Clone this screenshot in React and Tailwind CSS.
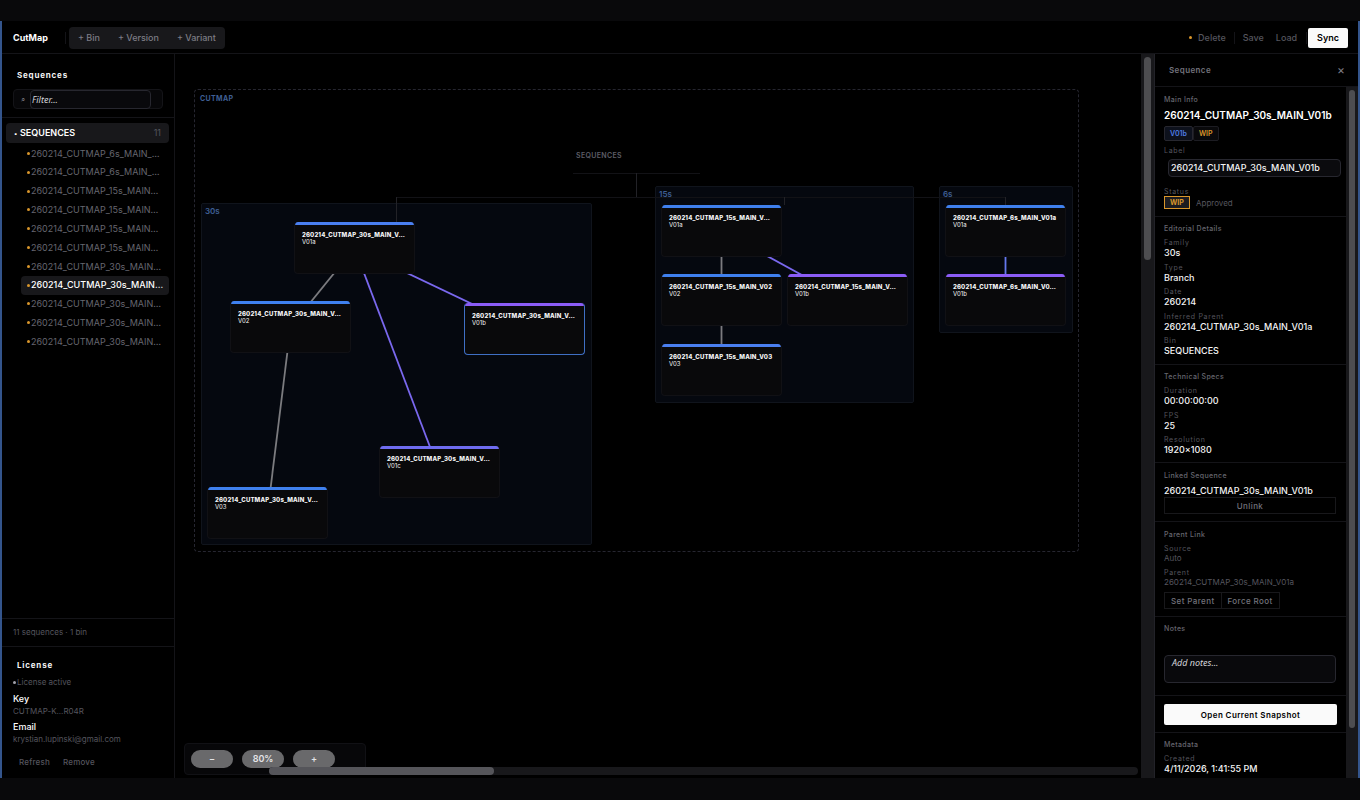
import { useState } from 'react';

const NODE_W = 121;
const NODE_H = 52;

const sequences = [
    { id: '6-1a', label: '260214_CUTMAP_6s_MAIN_…' },
    { id: '6-1b', label: '260214_CUTMAP_6s_MAIN_…' },
    { id: '15-1a', label: '260214_CUTMAP_15s_MAIN…' },
    { id: '15-1b', label: '260214_CUTMAP_15s_MAIN…' },
    { id: '15-2', label: '260214_CUTMAP_15s_MAIN…' },
    { id: '15-3', label: '260214_CUTMAP_15s_MAIN…' },
    { id: '30-1a', label: '260214_CUTMAP_30s_MAIN…' },
    { id: '30-1b', label: '260214_CUTMAP_30s_MAIN…' },
    { id: '30-1c', label: '260214_CUTMAP_30s_MAIN…' },
    { id: '30-2', label: '260214_CUTMAP_30s_MAIN…' },
    { id: '30-3', label: '260214_CUTMAP_30s_MAIN…' },
];

const groups = [
    { label: '30s', x: 26, y: 149, w: 391, h: 342 },
    { label: '15s', x: 480, y: 132, w: 259, h: 217 },
    { label: '6s', x: 764, y: 132, w: 134, h: 147 },
];

const nodes = [
    { id: '30-1a', title: '260214_CUTMAP_30s_MAIN_V…', version: 'V01a', x: 119, y: 168, bar: 'bg-[#4a7ff0]' },
    { id: '30-2', title: '260214_CUTMAP_30s_MAIN_V…', version: 'V02', x: 55, y: 247, bar: 'bg-[#3f80ee]' },
    { id: '30-1b', title: '260214_CUTMAP_30s_MAIN_V…', version: 'V01b', x: 289, y: 249, bar: 'bg-[#8b5cf6]' },
    { id: '30-1c', title: '260214_CUTMAP_30s_MAIN_V…', version: 'V01c', x: 204, y: 392, bar: 'bg-[#6f6cf0]' },
    { id: '30-3', title: '260214_CUTMAP_30s_MAIN_V…', version: 'V03', x: 32, y: 433, bar: 'bg-[#3f80ee]' },
    { id: '15-1a', title: '260214_CUTMAP_15s_MAIN_V…', version: 'V01a', x: 486, y: 151, bar: 'bg-[#3f80ee]' },
    { id: '15-2', title: '260214_CUTMAP_15s_MAIN_V02', version: 'V02', x: 486, y: 220, bar: 'bg-[#3f80ee]' },
    { id: '15-1b', title: '260214_CUTMAP_15s_MAIN_V…', version: 'V01b', x: 612, y: 220, bar: 'bg-[#8b5cf6]' },
    { id: '15-3', title: '260214_CUTMAP_15s_MAIN_V03', version: 'V03', x: 486, y: 290, bar: 'bg-[#4a7ff0]' },
    { id: '6-1a', title: '260214_CUTMAP_6s_MAIN_V01a', version: 'V01a', x: 770, y: 151, bar: 'bg-[#3f80ee]' },
    { id: '6-1b', title: '260214_CUTMAP_6s_MAIN_V0…', version: 'V01b', x: 770, y: 220, bar: 'bg-[#8b5cf6]' },
];

const edges = [
    ['30-1a', '30-2', '#7b7b7f'],
    ['30-2', '30-3', '#7b7b7f'],
    ['30-1a', '30-1b', '#7a68ee'],
    ['30-1a', '30-1c', '#7a68ee'],
    ['15-1a', '15-2', '#7b7b7f'],
    ['15-2', '15-3', '#7b7b7f'],
    ['15-1a', '15-1b', '#7a68ee'],
    ['6-1a', '6-1b', '#6478ee'],
];

function Toolbar() {
    return (
        <header className="flex h-[33px] shrink-0 items-center border-b border-[#141418] px-[10px] pt-px">
            <h1 className="pl-px text-[9px] font-bold text-white">CutMap</h1>
            <div className="ml-[17px] h-3 w-px bg-[#141418]" />
            <div className="ml-[3px] flex rounded-sm bg-[#18181b] text-[9px] font-medium text-[#7c7c84]">
                <button type="button" className="h-[22px] px-[9px]">+ Bin</button>
                <button type="button" className="h-[22px] px-[9px]">+ Version</button>
                <button type="button" className="h-[22px] px-[9px]">+ Variant</button>
            </div>
            <div className="ml-auto flex items-center text-[9px] font-medium text-[#55555e]">
                <span className="mr-[6px] h-[3px] w-[3px] rounded-full bg-[#d9962b]" />
                <button type="button">Delete</button>
                <div className="mx-2 h-3 w-px bg-[#141418]" />
                <button type="button">Save</button>
                <button type="button" className="ml-3">Load</button>
                <div className="mr-px ml-[9px] h-3 w-px bg-[#141418]" />
                <button type="button" className="h-5 rounded-xs bg-[#fafafa] px-[9px] font-semibold text-black">
                    Sync
                </button>
            </div>
        </header>
    );
}

function Sidebar({ selected, onSelect }) {
    return (
        <aside className="flex w-[173px] shrink-0 flex-col border-r border-[#141418]">
            <div className="border-b border-[#141418] px-[11px] pt-[15px] pb-2">
                <h2 className="pl-1 text-[8px] leading-3 font-bold tracking-widest text-[#f4f4f5]">Sequences</h2>
                <div className="mt-2 flex h-5 w-[150px] items-center rounded-sm border border-[#141418] bg-[#070709] pl-[7px]">
                    <span className="w-[9px] text-[8px] text-[#7c7c84]">⌕</span>
                    <input
                        type="text"
                        aria-label="Filter sequences"
                        placeholder="Filter..."
                        className="h-[19px] w-[121px] rounded-sm border border-[#27272f] bg-[#09090c] px-px font-['Noto_Sans',sans-serif] text-[9px] text-white outline-none placeholder:text-[#d4d4d8] placeholder:italic"
                    />
                </div>
            </div>

            <div className="flex-1 overflow-hidden pt-[5px] pr-[5px] pl-1">
                <button type="button" className="flex h-5 w-full items-center rounded-sm bg-[#18181b] px-2 text-[9px] text-white">
                    <span className="w-[6px] text-left text-[6px]">▪</span>
                    <span className="font-semibold">SEQUENCES</span>
                    <span className="ml-auto text-[#55555e]">11</span>
                </button>
                <ul className="mt-px grid h-[207px] grid-rows-11 pl-[15px]">
                    {sequences.map((s) => (
                        <li key={s.id}>
                            <button
                                type="button"
                                onClick={() => onSelect(s.id)}
                                className={`flex h-full w-full items-center rounded-sm px-[6px] text-[9px] whitespace-nowrap ${
                                    selected === s.id
                                        ? 'bg-[#18181b] font-medium text-white'
                                        : 'text-[#66666f]'
                                }`}
                            >
                                <span className="mr-px h-[3px] w-[3px] shrink-0 rounded-full bg-[#d9962b]" />
                                {s.label}
                            </button>
                        </li>
                    ))}
                </ul>
            </div>

            <p className="border-t border-[#141418] px-[11px] py-2 text-[8px] leading-[11px] text-[#55555e]">
                11 sequences · 1 bin
            </p>
            <section className="border-t border-[#141418] px-[11px] pt-3 pb-[10px] text-[8px] leading-3 text-[#55555e]">
                <h2 className="pl-1 font-bold tracking-widest text-[#f4f4f5]">License</h2>
                <p className="mt-[5px] flex items-center">
                    <span className="mr-px h-[3px] w-[3px] rounded-full bg-[#a1a1aa]" />
                    License active
                </p>
                <h3 className="mt-[5px] text-[9px] leading-3 font-medium text-white">Key</h3>
                <p>CUTMAP-K...R04R</p>
                <h3 className="mt-1 text-[9px] leading-3 font-medium text-white">Email</h3>
                <p>krystian.lupinski@gmail.com</p>
                <div className="mt-[11px] flex gap-[13px] pl-[6px] font-medium">
                    <button type="button" className="tracking-wide">Refresh</button>
                    <button type="button" className="tracking-wide">Remove</button>
                </div>
            </section>
        </aside>
    );
}

function Edge({ from, to, color }) {
    const a = nodes.find((n) => n.id === from);
    const b = nodes.find((n) => n.id === to);

    return (
        <line
            x1={a.x + NODE_W / 2}
            y1={a.y + NODE_H / 2}
            x2={b.x + NODE_W / 2}
            y2={b.y + NODE_H / 2}
            stroke={color}
            strokeWidth="1.8"
        />
    );
}

function Canvas({ selected }) {
    return (
        <main className="relative min-w-0 flex-1 overflow-hidden">
            {/* Bin outline */}
            <div className="absolute top-[35px] left-[19px] h-[463px] w-[885px] rounded-sm border border-dashed border-[#262630]">
                <span className="block px-[5px] pt-1 text-[7px] leading-[10px] font-bold tracking-wider text-[#3f5f94]">
                    CUTMAP
                </span>
            </div>

            {/* Family groups */}
            {groups.map((g) => (
                <div
                    key={g.label}
                    className="absolute rounded-xs border border-[#10141c] bg-[#05080f] px-[3px] pt-[2px] text-[8px] leading-[10px] font-semibold text-[#3f5f94]"
                    style={{ left: g.x, top: g.y, width: g.w, height: g.h }}
                >
                    {g.label}
                </div>
            ))}

            <svg className="absolute inset-0 h-full w-full" fill="none">
                <path d="M398 119.500H525M221 143.500H831" stroke="#121216" />
                <path d="M461.500 119V143M221.500 143V168M609.500 143V151M830.500 143V151" stroke="#222227" />
                {edges.map(([from, to, color]) => (
                    <Edge key={from + to} from={from} to={to} color={color} />
                ))}
            </svg>

            <span className="absolute top-[97px] left-[401px] text-[7px] leading-[10px] font-semibold tracking-wider text-[#5d5d66]">
                SEQUENCES
            </span>

            {/* Sequence nodes */}
            {nodes.map((n) => (
                <div
                    key={n.id}
                    className={`absolute overflow-hidden rounded border border-t-0 bg-[#09090b] ${
                        selected === n.id ? 'border-[#3f6fc4]' : 'border-[#111115]'
                    }`}
                    style={{ left: n.x, top: n.y, width: NODE_W, height: NODE_H }}
                >
                    <div className={`h-[3px] ${n.bar}`} />
                    <div className="px-[7px] pt-[6px] text-[6px] whitespace-nowrap text-[#f4f4f5]">
                        <p className="leading-[8px] font-extrabold tracking-wide">{n.title}</p>
                        <p className="leading-[6px]">{n.version}</p>
                    </div>
                </div>
            ))}

            {/* Zoom controls */}
            <div className="absolute bottom-[3px] left-[9px] flex h-8 w-[182px] gap-[9px] rounded border border-[#111115] bg-[#070709] px-[6px] pt-[6px] text-[9px] font-semibold text-[#e4e4e7]">
                <button type="button" aria-label="Zoom out" className="h-[18px] w-[42px] rounded-full bg-[#69696b]">−</button>
                <button type="button" className="h-[18px] w-[42px] rounded-full bg-[#69696b]">80%</button>
                <button type="button" aria-label="Zoom in" className="h-[18px] w-[42px] rounded-full bg-[#69696b]">+</button>
            </div>

            {/* Horizontal scrollbar */}
            <div className="absolute right-[3px] bottom-[3px] left-[94px] h-2 rounded-full bg-[#18181b]">
                <div className="h-2 w-[225px] rounded-full bg-[#55555a]" />
            </div>
        </main>
    );
}

function Section({ title, className = '', children }) {
    return (
        <section className={`border-b border-[#141418] px-[9px] last:border-b-0 ${className}`}>
            {title && <h3 className="text-[7px] leading-[10px] font-medium tracking-wider text-[#66666f]">{title}</h3>}
            {children}
        </section>
    );
}

function Field({ label, value, muted }) {
    return (
        <div>
            <dt className="text-[7px] leading-[9px] tracking-widest text-[#55555e]">{label}</dt>
            <dd className={muted ? 'text-[8px] leading-[10px] text-[#55555e]' : 'text-[9px] leading-[11px] font-medium text-[#f4f4f5]'}>
                {value}
            </dd>
        </div>
    );
}

function Inspector() {
    const [label, setLabel] = useState('260214_CUTMAP_30s_MAIN_V01b');
    const [notes, setNotes] = useState('');

    return (
        <aside className="flex w-[203px] shrink-0 flex-col">
            <div className="flex h-[33px] shrink-0 items-center justify-between border-b border-[#141418] pr-[13px] pl-[14px]">
                <h2 className="text-[8px] font-semibold tracking-wider text-[#73737c]">Sequence</h2>
                <button type="button" aria-label="Close" className="text-[12px] text-[#7c7c84]">×</button>
            </div>

            <div className="flex min-h-0 flex-1">
                <div className="min-w-0 flex-1 overflow-hidden">
                    <Section title="Main Info" className="h-[130px] pt-2">
                        <h2 className="mt-[3px] text-[10px] leading-[14px] font-semibold text-white">260214_CUTMAP_30s_MAIN_V01b</h2>
                        <div className="mt-1 flex text-[7px] leading-[10px] font-semibold">
                            <span className="rounded-xs border border-[#27272f] bg-[#0d111c] px-[5px] pt-[2px] pb-px text-[#4f7fe8]">V01b</span>
                            <span className="rounded-xs border border-[#1c1c22] bg-[#09090b] px-[5px] pt-[2px] pb-px text-[#d9962b]">WIP</span>
                        </div>
                        <label htmlFor="label" className="mt-[5px] block text-[7px] leading-[10px] tracking-widest text-[#55555e]">
                            Label
                        </label>
                        <input
                            id="label"
                            type="text"
                            value={label}
                            onChange={(e) => setLabel(e.target.value)}
                            className="mt-[3px] ml-1 block h-[18px] w-[173px] rounded-sm border border-[#27272f] bg-[#0b0b0e] px-[2px] pb-px text-[9px] font-medium text-[#f4f4f5] outline-none"
                        />
                        <p className="mt-[10px] text-[7px] leading-[9px] tracking-widest text-[#55555e]">Status</p>
                        <div className="flex items-center text-[8px]">
                            <button type="button" className="h-[13px] w-[26px] border border-[#d9962b] bg-[#1c1c20] text-[7px] leading-[11px] font-bold text-[#d9962b]">
                                WIP
                            </button>
                            <button type="button" className="ml-[6px] text-[#55555e]">Approved</button>
                        </div>
                    </Section>

                    <Section title="Editorial Details" className="pt-[7px] pb-2">
                        <dl className="mt-1 flex h-[118px] flex-col justify-between">
                            <Field label="Family" value="30s" />
                            <Field label="Type" value="Branch" />
                            <Field label="Date" value="260214" />
                            <Field label="Inferred Parent" value="260214_CUTMAP_30s_MAIN_V01a" />
                            <Field label="Bin" value="SEQUENCES" />
                        </dl>
                    </Section>

                    <Section title="Technical Specs" className="pt-[7px] pb-[7px]">
                        <dl className="mt-1 flex h-[69px] flex-col justify-between">
                            <Field label="Duration" value="00:00:00:00" />
                            <Field label="FPS" value="25" />
                            <Field label="Resolution" value="1920×1080" />
                        </dl>
                    </Section>

                    <Section title="Linked Sequence" className="pt-2 pb-[7px]">
                        <p className="mt-1 text-[9px] leading-3 font-medium text-[#f4f4f5]">260214_CUTMAP_30s_MAIN_V01b</p>
                        <button type="button" className="block h-[17px] w-full max-w-[172px] border border-[#18181b] text-[8px] font-medium tracking-wider text-[#73737c]">
                            Unlink
                        </button>
                    </Section>

                    <Section title="Parent Link" className="pt-2 pb-[7px]">
                        <dl className="mt-1 flex flex-col gap-[5px]">
                            <Field label="Source" value="Auto" muted />
                            <Field label="Parent" value="260214_CUTMAP_30s_MAIN_V01a" muted />
                        </dl>
                        <div className="mt-[5px] flex text-[8px] font-medium text-[#73737c]">
                            <button type="button" className="h-[17px] border border-[#18181b] px-[6px] tracking-wider">Set Parent</button>
                            <button type="button" className="h-[17px] border border-l-0 border-[#18181b] px-[6px] tracking-wider">Force Root</button>
                        </div>
                    </Section>

                    <Section title="Notes" className="pt-[7px] pb-3">
                        <textarea
                            aria-label="Notes"
                            placeholder="Add notes..."
                            value={notes}
                            onChange={(e) => setNotes(e.target.value)}
                            className="mt-[21px] block h-7 w-[172px] resize-none rounded-sm border border-[#27272f] bg-[#09090c] px-[7px] py-px font-['Noto_Sans',sans-serif] text-[9px] leading-3 text-white outline-none placeholder:text-[#d4d4d8] placeholder:italic"
                        />
                    </Section>

                    <Section className="pt-2 pb-[7px]">
                        <button type="button" className="block h-[21px] w-[173px] rounded-xs bg-[#fafafa] text-[8px] font-semibold tracking-wider text-black">
                            Open Current Snapshot
                        </button>
                    </Section>

                    <Section title="Metadata" className="pt-[7px]">
                        <dl className="mt-1">
                            <Field label="Created" value="4/11/2026, 1:41:55 PM" />
                        </dl>
                    </Section>
                </div>

                <div className="w-3 shrink-0 bg-[#18181b] px-[3px] pt-[3px]">
                    <div className="h-[638px] rounded-full bg-[#4d4d50]" />
                </div>
            </div>
        </aside>
    );
}

export default function App() {
    const [selected, setSelected] = useState('30-1b');

    return (
        <div className="h-screen bg-[#09090b] pt-[21px] pb-[22px] font-['Inter',sans-serif]">
            <div className="flex h-full flex-col overflow-hidden border-x-2 border-[#34558c] bg-black">
                <Toolbar />
                <div className="flex min-h-0 flex-1">
                    <Sidebar selected={selected} onSelect={setSelected} />
                    <Canvas selected={selected} />
                    <div className="w-[14px] shrink-0 border-r border-[#222228] bg-[#18181b] px-[3px] pt-[3px]">
                        <div className="h-[203px] rounded-full bg-[#4d4d50]" />
                    </div>
                    <Inspector />
                </div>
            </div>
        </div>
    );
}
